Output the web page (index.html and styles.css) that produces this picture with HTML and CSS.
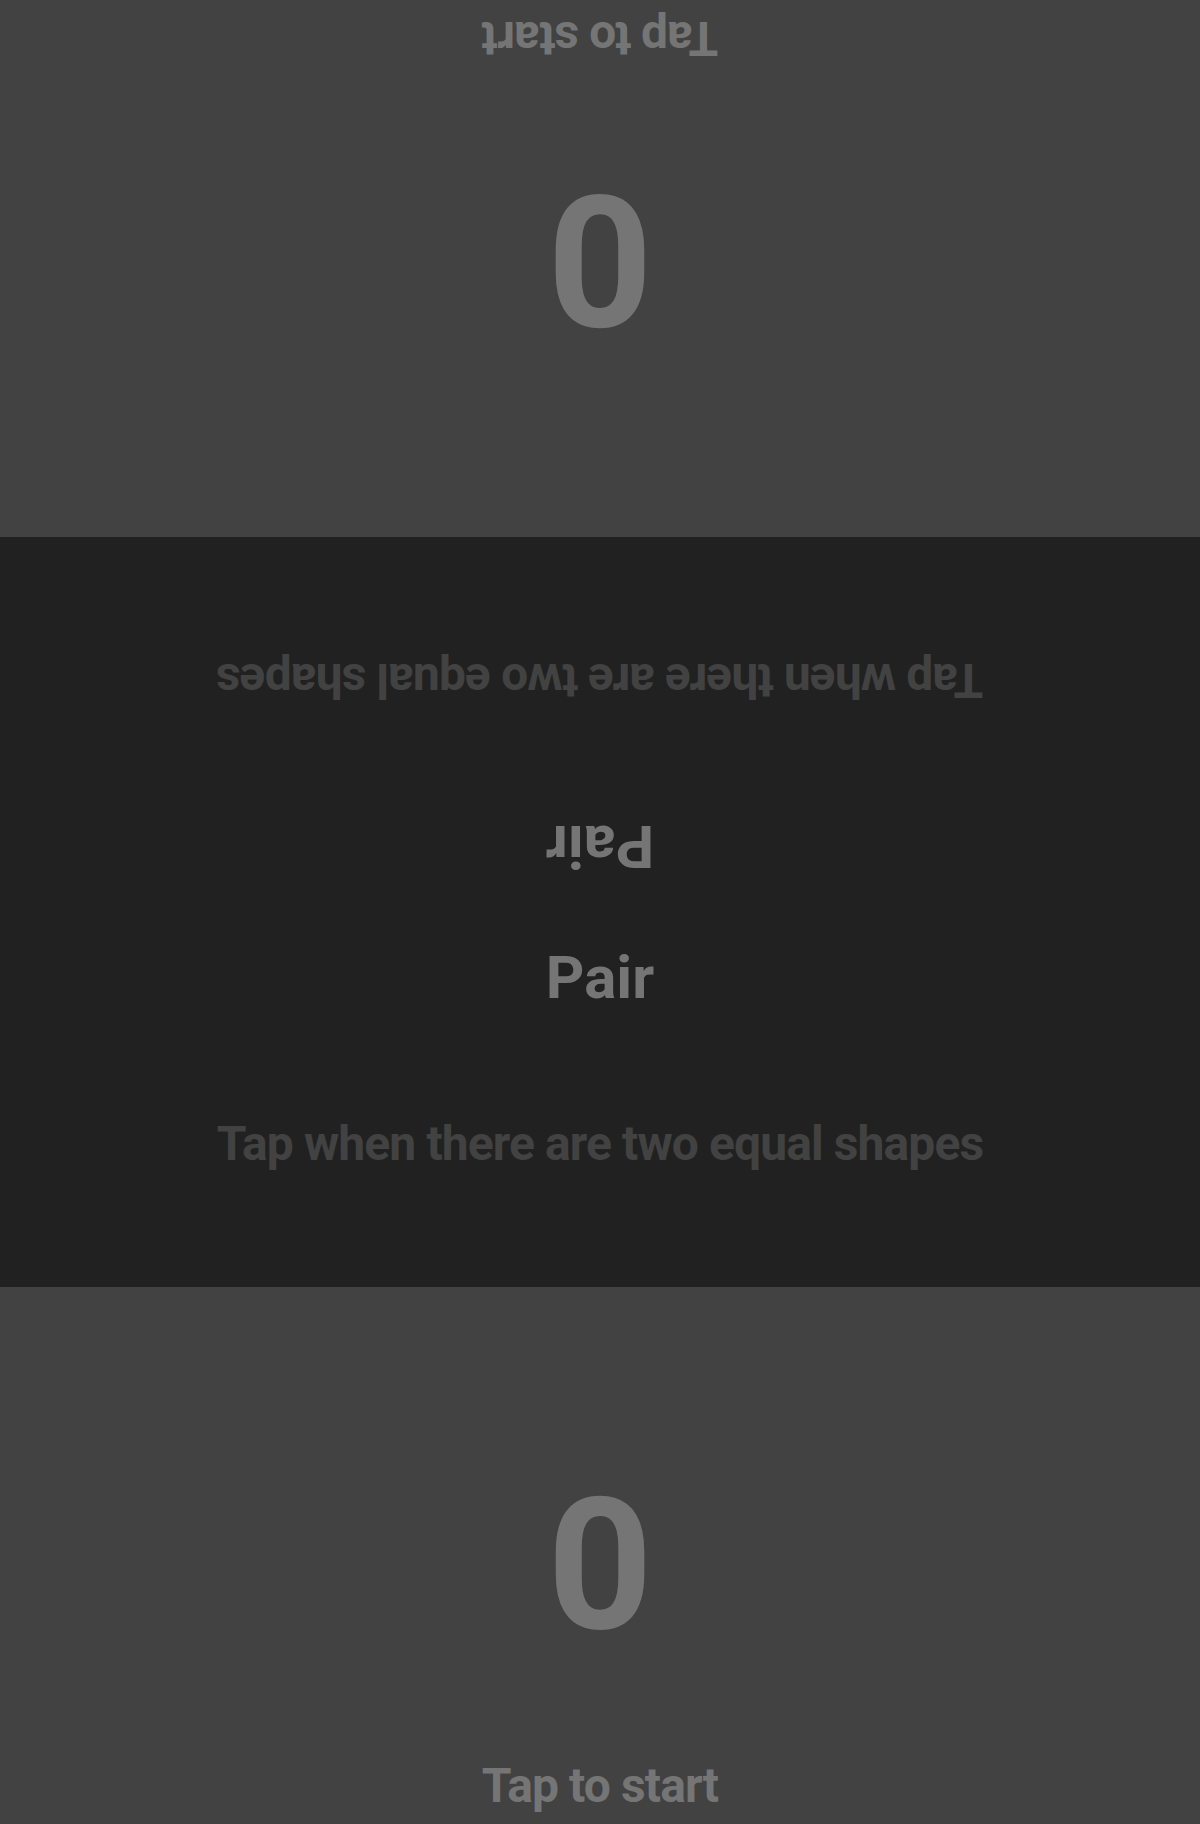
FILE: index.html
```html
<!DOCTYPE html>
<html>
<head>
<meta charset="utf-8">
<link rel="stylesheet" href="styles.css">
</head>
<body>
<div class="app">
  <section class="player player--top">
    <div class="score">0</div>
    <div class="hint">Tap to start</div>
  </section>
  <section class="board">
    <div class="half half--top">
      <div class="mode">Pair</div>
      <div class="instruction">Tap when there are two equal shapes</div>
    </div>
    <div class="half">
      <div class="mode">Pair</div>
      <div class="instruction">Tap when there are two equal shapes</div>
    </div>
  </section>
  <section class="player">
    <div class="score">0</div>
    <div class="hint">Tap to start</div>
  </section>
</div>
</body>
</html>
```

FILE: styles.css
```css
html, body {
  margin: 0;
  padding: 0;
}

body {
  font-family: Roboto, "Liberation Sans", sans-serif;
  font-weight: 700;
  background: #212121;
}

.app {
  width: 1200px;
  height: 1824px;
  display: flex;
  flex-direction: column;
  overflow: hidden;
}

.player {
  height: 537px;
  flex: 0 0 537px;
  background: #424242;
  display: flex;
  flex-direction: column;
  align-items: center;
  color: #757575;
}

.player--top {
  transform: rotate(180deg);
}

.score {
  font-size: 184px;
  margin-top: 170px;
}

.hint {
  font-size: 48px;
  letter-spacing: -0.9px;
  margin-top: auto;
  padding-bottom: 10px;
}

.board {
  flex: 0 0 750px;
  height: 750px;
  background: #212121;
  display: flex;
  flex-direction: column;
}

.half {
  height: 375px;
  flex: 0 0 375px;
  display: flex;
  flex-direction: column;
  align-items: center;
  padding-top: 30px;
  box-sizing: border-box;
}

.half--top {
  transform: rotate(180deg);
}

.mode {
  font-size: 60px;
  color: #757575;
}

.instruction {
  font-size: 48px;
  letter-spacing: -0.9px;
  color: #424242;
  margin-top: 102px;
}
```
